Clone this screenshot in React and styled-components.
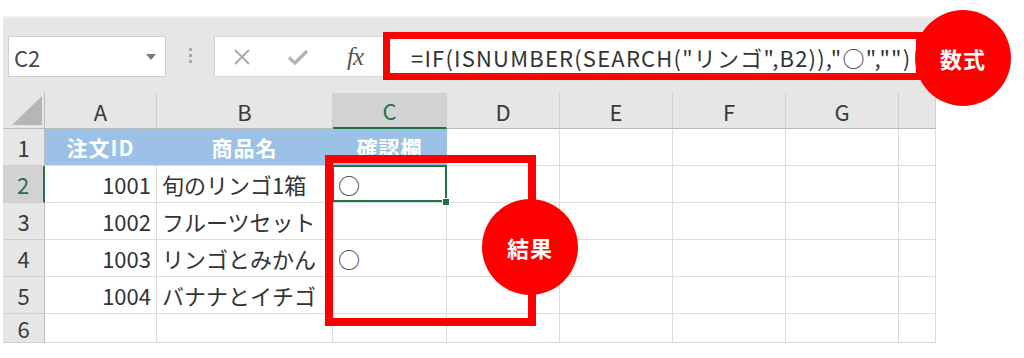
import React from "react";
import styled, { createGlobalStyle, css } from "styled-components";

const GlobalStyle = createGlobalStyle`
  html, body {
    margin: 0;
    padding: 0;
    background: #ffffff;
  }
  body {
    font-family: "Noto Sans CJK JP", "Noto Sans", sans-serif;
    color: #333333;
  }
`;

const RED = "#ff0000";
const GREEN = "#217346";
const GRID = "#dcdcdc";

const PageStyled = styled.div`
  position: relative;
  width: 1024px;
  height: 358px;
  padding: 16px 0 0 3px;
  box-sizing: border-box;
  overflow: hidden;
`;
const SheetStyled = styled.div`
  width: 933px;
`;
const FormulaBarStyled = styled.div`
  display: flex;
  align-items: flex-start;
  height: 77px;
  padding: 20px 0 0 5px;
  box-sizing: border-box;
  background: #e6e6e6;
  border-top: 2px solid #f0f0f0;
`;
const NameBoxStyled = styled.div`
  display: flex;
  align-items: center;
  justify-content: space-between;
  width: 158px;
  height: 41px;
  margin-top: -2px;
  padding: 0 9px 0 5px;
  box-sizing: border-box;
  background: #ffffff;
  border: 1px solid #d0d0d0;
  font-size: 22px;
  color: #474747;
`;
const CaretStyled = styled.span`
  width: 0;
  height: 0;
  border-left: 5px solid transparent;
  border-right: 5px solid transparent;
  border-top: 6px solid #7a7a7a;
`;
const DotsStyled = styled.div`
  display: flex;
  flex-direction: column;
  gap: 3px;
  width: 48px;
  align-items: center;
  padding-top: 10px;
  span {
    width: 3px;
    height: 3px;
    background: #a8a8a8;
  }
`;
const FormulaBoxStyled = styled.div`
  position: relative;
  flex: 1;
  display: flex;
  align-items: center;
  height: 41px;
  margin-top: -2px;
  box-sizing: border-box;
  background: #ffffff;
  border: 1px solid #d4d4d4;
  border-right: none;
`;
const IconBtnStyled = styled.span`
  display: flex;
  align-items: center;
  justify-content: center;
  width: ${(p) => p.$w}px;
  height: 100%;
`;
const FxStyled = styled.span`
  font-family: "Liberation Serif", serif;
  font-style: italic;
  font-size: 25px;
  color: #555555;
  letter-spacing: -1px;
`;
const FormulaTextStyled = styled.div`
  padding-left: 28px;
  font-size: 22px;
  color: #333333;
  white-space: nowrap;
  letter-spacing: 1.2px;
`;

const GridStyled = styled.div`
  display: grid;
  grid-template-columns: 42px 112px 176px 114px 113px 113px 113px 113px 37px;
  grid-template-rows: 36px repeat(5, 37px) 29px;
  background: #ffffff;
`;
const CellStyled = styled.div`
  position: relative;
  display: flex;
  align-items: center;
  box-sizing: border-box;
  border-right: 1px solid ${GRID};
  border-bottom: 1px solid ${GRID};
  font-size: 22px;
  color: #333333;
  white-space: nowrap;
  overflow: visible;
  padding: 0 5px;
  justify-content: ${(p) =>
    p.$align === "right" ? "flex-end" : p.$align === "center" ? "center" : "flex-start"};
  ${(p) =>
    p.$fill &&
    css`
      background: #9bc2e6;
      border-right-color: #9bc2e6;
      color: #ffffff;
      font-weight: 700;
      font-size: 21px;
      letter-spacing: 1px;
    `}
  ${(p) =>
    p.$selected &&
    css`
      &::after {
        content: "";
        position: absolute;
        inset: -1px -1px 0 -1px;
        border: 2px solid ${GREEN};
        pointer-events: none;
      }
    `}
`;
const HeaderCellStyled = styled.div`
  display: flex;
  align-items: center;
  justify-content: center;
  box-sizing: border-box;
  background: ${(p) => (p.$active ? "#d2d2d2" : "#e6e6e6")};
  border-right: 1px solid #cfcfcf;
  border-bottom: ${(p) => (p.$active ? `2px solid ${GREEN}` : "1px solid #bcbcbc")};
  font-size: 22px;
  color: ${(p) => (p.$active ? GREEN : "#3a3a3a")};
`;
const RowHeadStyled = styled.div`
  display: flex;
  align-items: center;
  justify-content: center;
  box-sizing: border-box;
  background: ${(p) => (p.$active ? "#d2d2d2" : "#e6e6e6")};
  border-right: ${(p) => (p.$active ? `2px solid ${GREEN}` : "1px solid #bcbcbc")};
  border-bottom: 1px solid #d0d0d0;
  font-size: 22px;
  color: ${(p) => (p.$active ? GREEN : "#3a3a3a")};
`;
const CornerStyled = styled.div`
  display: flex;
  align-items: flex-end;
  justify-content: flex-end;
  padding: 0 2px 3px 0;
  box-sizing: border-box;
  background: #e6e6e6;
  border-right: 1px solid #bcbcbc;
  border-bottom: 1px solid #bcbcbc;
  &::before {
    content: "";
    width: 0;
    height: 0;
    border-left: 30px solid transparent;
    border-bottom: 29px solid #b6b6b6;
  }
`;
const HandleStyled = styled.span`
  position: absolute;
  right: -4px;
  bottom: -4px;
  width: 6px;
  height: 6px;
  background: ${GREEN};
  border: 1px solid #ffffff;
  z-index: 2;
`;

const FrameStyled = styled.div`
  position: absolute;
  box-sizing: border-box;
  border: ${(p) => p.$t}px solid ${RED};
  left: ${(p) => p.$x}px;
  top: ${(p) => p.$y}px;
  width: ${(p) => p.$w}px;
  height: ${(p) => p.$h}px;
  z-index: 5;
`;
const BadgeStyled = styled.div`
  position: absolute;
  display: flex;
  align-items: center;
  justify-content: center;
  left: ${(p) => p.$x}px;
  top: ${(p) => p.$y}px;
  width: 96px;
  height: 96px;
  border-radius: 50%;
  background: ${RED};
  color: #ffffff;
  font-weight: 700;
  font-size: 22px;
  letter-spacing: 1px;
  z-index: 6;
`;

const columns = ["A", "B", "C", "D", "E", "F", "G", ""];
const rows = [
  ["注文ID", "商品名", "確認欄"],
  ["1001", "旬のリンゴ1箱", "○"],
  ["1002", "フルーツセット", ""],
  ["1003", "リンゴとみかん", "○"],
  ["1004", "バナナとイチゴ", ""],
  ["", "", ""],
];

const CrossIcon = () => (
  <svg width="18" height="18" viewBox="0 0 18 18">
    <path d="M2 2L16 16M16 2L2 16" stroke="#ababab" strokeWidth="2" fill="none" />
  </svg>
);
const CheckIcon = () => (
  <svg width="22" height="18" viewBox="0 0 22 18">
    <path d="M2 9.5L8 15L20 3" stroke="#b3b3b3" strokeWidth="3.2" fill="none" />
  </svg>
);

const App = () => {
  return (
    <PageStyled>
      <GlobalStyle />
      <SheetStyled>
        <FormulaBarStyled>
          <NameBoxStyled>
            <span>C2</span>
            <CaretStyled />
          </NameBoxStyled>
          <DotsStyled>
            <span />
            <span />
            <span />
          </DotsStyled>
          <FormulaBoxStyled>
            <IconBtnStyled $w={54}>
              <CrossIcon />
            </IconBtnStyled>
            <IconBtnStyled $w={58}>
              <CheckIcon />
            </IconBtnStyled>
            <IconBtnStyled $w={56}>
              <FxStyled>fx</FxStyled>
            </IconBtnStyled>
            <FormulaTextStyled>=IF(ISNUMBER(SEARCH("リンゴ",B2)),"○","")</FormulaTextStyled>
          </FormulaBoxStyled>
        </FormulaBarStyled>
        <GridStyled>
          <CornerStyled />
          {columns.map((c) => (
            <HeaderCellStyled key={c || "h"} $active={c === "C"}>
              {c}
            </HeaderCellStyled>
          ))}
          {rows.map((r, i) => (
            <React.Fragment key={i}>
              <RowHeadStyled $active={i === 1}>{i + 1}</RowHeadStyled>
              {columns.map((c, j) => {
                const value = r[j] || "";
                const header = i === 0 && j < 3;
                return (
                  <CellStyled
                    key={c || "h"}
                    $fill={header}
                    $align={header ? "center" : j === 0 ? "right" : "left"}
                    $selected={i === 1 && j === 2}
                  >
                    {value}
                    {i === 1 && j === 2 && <HandleStyled />}
                  </CellStyled>
                );
              })}
            </React.Fragment>
          ))}
        </GridStyled>
      </SheetStyled>
      <FrameStyled $x={383} $y={32} $w={540} $h={48} $t={7} />
      <BadgeStyled $x={915} $y={10}>数式</BadgeStyled>
      <FrameStyled $x={325} $y={155} $w={211} $h={171} $t={8} />
      <BadgeStyled $x={482} $y={199}>結果</BadgeStyled>
    </PageStyled>
  );
};

export default App;
